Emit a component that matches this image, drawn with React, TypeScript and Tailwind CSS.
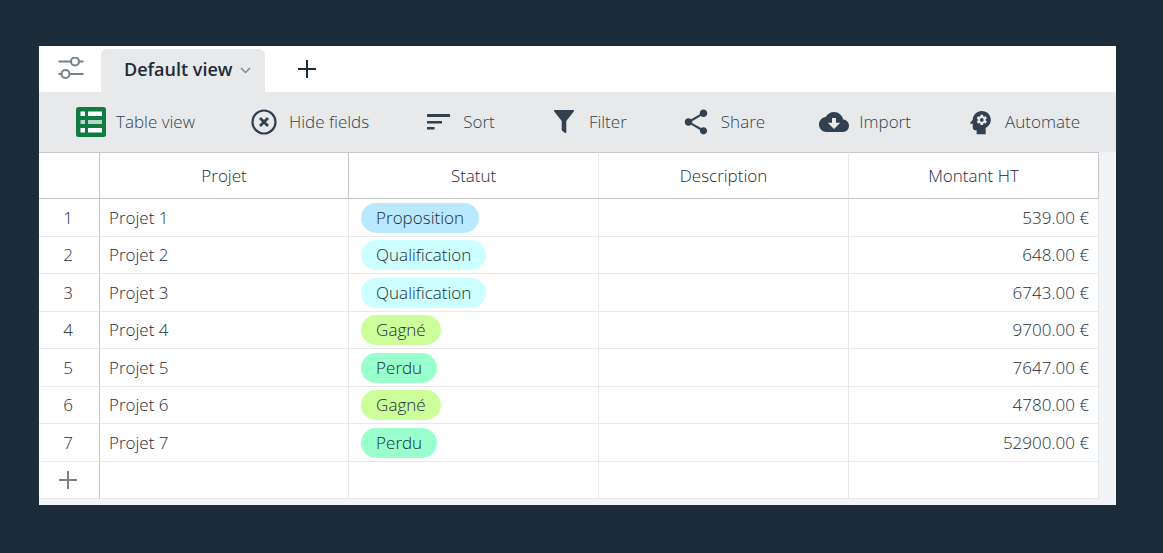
import type { ReactNode } from "react";
import { IoMdCloudDownload, IoMdShare } from "react-icons/io";
import { MdPsychology } from "react-icons/md";

const rows = [
  { projet: "Projet 1", statut: "Proposition", montant: "539.00 €" },
  { projet: "Projet 2", statut: "Qualification", montant: "648.00 €" },
  { projet: "Projet 3", statut: "Qualification", montant: "6743.00 €" },
  { projet: "Projet 4", statut: "Gagné", montant: "9700.00 €" },
  { projet: "Projet 5", statut: "Perdu", montant: "7647.00 €" },
  { projet: "Projet 6", statut: "Gagné", montant: "4780.00 €" },
  { projet: "Projet 7", statut: "Perdu", montant: "52900.00 €" },
];

const statusColors: Record<string, string> = {
  Proposition: "bg-[#b9e9ff]",
  Qualification: "bg-[#ccffff]",
  Gagné: "bg-[#ccff99]",
  Perdu: "bg-[#99ffcc]",
};

function SlidersIcon() {
  return (
    <svg width="26" height="24" viewBox="0 0 26 24" fill="none" stroke="#74808b" strokeWidth="2" aria-hidden>
      <path d="M0.5 4.5H13M21 4.5h4.5M0.5 17H3.5M11.5 17h14" />
      <circle cx="17" cy="4.5" r="4" />
      <circle cx="7.5" cy="17" r="4" />
    </svg>
  );
}

function TableIcon() {
  return (
    <svg width="30" height="30" viewBox="0 0 30 30" aria-hidden>
      <rect width="30" height="30" rx="2.5" fill="#107c41" />
      <g fill="#fff">
        <path d="M4.5 4.5H9V9H4.5zM12 4.5h14V9H12zM4.5 21H9v4.5H4.5zM12 21h14v4.5H12z" />
        <path d="M4.5 13H9v4H4.5zM12 13h14v4H12z" opacity=".7" />
      </g>
    </svg>
  );
}

function HideIcon() {
  return (
    <svg width="26" height="26" viewBox="0 0 26 26" fill="none" stroke="currentColor" aria-hidden>
      <circle cx="13" cy="13" r="11.5" strokeWidth="2.2" />
      <path d="M9 9l8 8M17 9l-8 8" strokeWidth="2.8" />
    </svg>
  );
}

function SortIcon() {
  return (
    <svg width="24" height="16" viewBox="0 0 24 16" fill="currentColor" aria-hidden>
      <path d="M1 0h23v3H1zM1 7h15v2.5H1zM1 13h7.5v2.5H1z" />
    </svg>
  );
}

function FilterIcon() {
  return (
    <svg width="20" height="24" viewBox="0 0 20 24" fill="currentColor" aria-hidden>
      <path d="M.8 0h18.4c.8 0 1 .9.6 1.6L12.3 11v11.2c0 .9-.7 1.1-1.3.7l-2.6-2c-.5-.4-.7-.8-.7-1.4V11L.2 1.6C-.2.9 0 0 .8 0z" />
    </svg>
  );
}

const tools: { label: string; icon: ReactNode }[] = [
  { label: "Table view", icon: <TableIcon /> },
  { label: "Hide fields", icon: <HideIcon /> },
  { label: "Sort", icon: <SortIcon /> },
  { label: "Filter", icon: <FilterIcon /> },
  { label: "Share", icon: <IoMdShare size={30} /> },
  { label: "Import", icon: <IoMdCloudDownload size={32} className="shrink-0" /> },
  { label: "Automate", icon: <MdPsychology size={31} className="shrink-0" /> },
];

function Tabs() {
  return (
    <div className="flex h-[46px] items-end bg-white">
      <button type="button" aria-label="View options" className="flex h-full w-[62px] items-center pl-[19px]">
        <SlidersIcon />
      </button>
      <button
        type="button"
        className="flex h-[43px] items-center gap-2 rounded-t-md bg-[#e8e9eb] pr-3.5 pl-[23px] text-lg font-semibold"
      >
        <span className="pb-1">Default view</span>
        <svg width="11" height="7" viewBox="0 0 11 7" fill="none" stroke="#808890" strokeWidth="1.5" aria-hidden>
          <path d="M1 1l4.5 4.5L10 1" />
        </svg>
      </button>
      <button type="button" aria-label="Add view" className="ml-6 flex h-full w-9 items-center justify-center">
        <svg width="18" height="18" viewBox="0 0 18 18" stroke="#1d2c39" strokeWidth="2" aria-hidden>
          <path d="M9 0v18M0 9h18" />
        </svg>
      </button>
    </div>
  );
}

function Toolbar() {
  return (
    <div className="flex h-[60px] items-center justify-between bg-[#e8e9eb] pr-9 pl-[37px] text-[#31414f]">
      {tools.map((t) => (
        <button key={t.label} type="button" className="flex items-center gap-2.5 whitespace-nowrap">
          <span className="flex w-[30px] justify-center">{t.icon}</span>
          {t.label}
        </button>
      ))}
    </div>
  );
}

function Grid() {
  return (
    <div className="bg-[#f2f4f7] pr-[17px] pb-1.5">
      <table className="w-full table-fixed border-separate border-spacing-0 bg-white">
        <colgroup>
          <col className="w-[61px]" />
          <col className="w-[23.5%]" />
          <col />
          <col />
          <col />
        </colgroup>
        <thead>
          <tr className="h-[47px] [&>th]:border-y [&>th]:border-r [&>th]:border-y-[#c6c8ca] [&>th]:p-0 [&>th]:font-[350]">
            <th className="border-r-[#c6c8ca]" aria-label="Row" />
            <th className="border-r-[#c6c8ca]">Projet</th>
            <th className="border-r-[#e7e8ea]">Statut</th>
            <th className="border-r-[#e7e8ea]">Description</th>
            <th className="border-r-[#c6c8ca]">Montant HT</th>
          </tr>
        </thead>
        <tbody className="[&_td]:border-r [&_td]:border-b [&_td]:border-[#e7e8ea] [&_td]:p-0 [&_td:first-child]:border-r-[#c6c8ca]">
          {rows.map((r, i) => (
            <tr key={r.projet} className="odd:h-[38px] even:h-[37px]">
              <td className="text-center">
                <span className="pr-0.5">{i + 1}</span>
              </td>
              <td>
                <span className="pl-[9px]">{r.projet}</span>
              </td>
              <td>
                <span className={`ml-3 flex h-[30px] w-fit items-center rounded-full px-[15px] ${statusColors[r.statut]}`}>
                  {r.statut}
                </span>
              </td>
              <td />
              <td className="text-right">
                <span className="pr-[9px]">{r.montant}</span>
              </td>
            </tr>
          ))}
          <tr className="h-[37px]">
            <td>
              <button type="button" aria-label="Add row" className="flex w-full justify-center pr-0.5">
                <svg width="18" height="18" viewBox="0 0 18 18" stroke="#808080" strokeWidth="2" aria-hidden>
                  <path d="M9 0v18M0 9h18" />
                </svg>
              </button>
            </td>
            <td />
            <td />
            <td />
            <td />
          </tr>
        </tbody>
      </table>
    </div>
  );
}

export default function App() {
  return (
    <div className="min-h-screen bg-[#1d2c39] pt-[46px] pr-[47px] pb-12 pl-[39px] font-['Open_Sans','Noto_Sans',sans-serif] text-[17px] leading-6 font-[350] text-[#1d2c39]">
      <main>
        <Tabs />
        <Toolbar />
        <Grid />
      </main>
    </div>
  );
}
